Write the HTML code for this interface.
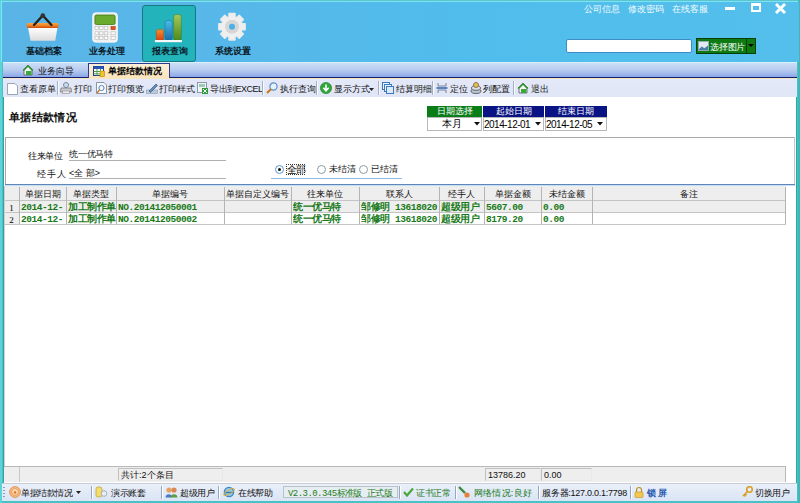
<!DOCTYPE html>
<html><head><meta charset="utf-8">
<style>
*{margin:0;padding:0;box-sizing:border-box}
html,body{width:800px;height:503px;overflow:hidden;background:#fff;font-family:"Liberation Sans",sans-serif;font-size:9px;color:#000}
div,span,svg{position:absolute}
#frame{left:0;top:0;width:800px;height:503px;background:#48c2c6}
#header{left:2px;top:2px;width:797px;height:60px;background:linear-gradient(90deg,#5ab4e6 0%,#56b8e9 30%,#50bdec 60%,#54bfeb 100%)}
.hlab{top:45px;font-size:9px;font-weight:bold;color:#0a1826;white-space:nowrap}
.toplink{top:3px;color:#f4fbff;font-size:9px;white-space:nowrap}
#tabbar{left:3px;top:62px;width:794px;height:16px;background:linear-gradient(180deg,#d8f2fc 0px,#d8f2fc 1px,#ccdef6 1px,#b6cbf0 55%,#92ace8 93%,#86a6f0 100%);border-bottom:1px solid #14206a}
#toolbar{left:3px;top:78px;width:794px;height:19px;background:linear-gradient(180deg,#f6e6c6 0px,#f6e6c6 1px,#e4e8f8 1px,#e0e6f6 100%)}
#content{left:3px;top:97px;width:794px;height:386px;background:#fff;border-left:1px solid #3a9ea4;border-right:1px solid #2ca8a8}
#status{left:2px;top:483px;width:795px;height:18px;background:linear-gradient(180deg,#c8ccd4 0px,#c8ccd4 1px,#eaf0fa 1px,#dae4f4 100%)}
.tb{top:84px;font-size:9px;color:#111;white-space:nowrap;line-height:11px}
.sep{top:81px;width:2px;height:14px;background:#a4b0c4;border-right:1px solid #f8faff}
.sti{top:488px;font-size:9px;letter-spacing:-0.4px;white-space:nowrap;line-height:10px}
.ssep{top:486px;width:2px;height:13px;background:#98a8bc;border-right:1px solid #fff}
.cell{white-space:nowrap;overflow:hidden;line-height:12px}
.hd{background:#ededed;text-align:center;color:#111}
.gv{color:#187a18;font-weight:bold;font-size:9.5px;font-family:"Liberation Mono",monospace;letter-spacing:-0.45px}
</style></head>
<body>
<div id="frame"></div>
<div style="left:0;top:0;width:800px;height:1px;background:#5cc6cc"></div>
<div style="left:0;top:1px;width:800px;height:1px;background:#7ae4f4"></div>
<div style="left:0;top:0;width:2px;height:503px;background:#5ad4d6"></div>
<div style="left:1px;top:1px;width:1px;height:61px;background:#7ae8f6"></div>
<div style="left:798px;top:0;width:2px;height:503px;background:#3cb8b8"></div>
<div id="header"></div>
<!-- header buttons -->
<div style="left:142px;top:5px;width:54px;height:57px;background:#22b3bb;border:1px solid #177a82;border-radius:3px"></div>
<!-- header icons -->
<svg style="left:20px;top:8px" width="50" height="37" viewBox="0 0 50 37">
 <defs><linearGradient id="rim" x1="0" y1="0" x2="0" y2="1"><stop offset="0" stop-color="#f8a848"/><stop offset="0.6" stop-color="#ee7a1e"/><stop offset="1" stop-color="#c84a08"/></linearGradient>
 <linearGradient id="bod" x1="0" y1="0" x2="0" y2="1"><stop offset="0" stop-color="#ffffff"/><stop offset="1" stop-color="#dcdcdc"/></linearGradient></defs>
 <path d="M8 19.5 L37.5 19.5 L35.2 32.7 L10.5 32.7Z" fill="url(#bod)"/>
 <rect x="6.6" y="15" width="32" height="5" rx="2" fill="url(#rim)"/>
 <path d="M14 17 L22.8 7.4 L31.5 17" stroke="#222" stroke-width="2.3" fill="none" stroke-linecap="round"/>
 <circle cx="22.8" cy="7.6" r="2.3" fill="#333"/>
</svg>
<svg style="left:85px;top:8px" width="40" height="37" viewBox="0 0 40 37">
 <rect x="7.7" y="4.8" width="24.7" height="29.4" rx="3" fill="#f0f0f0" stroke="#fafafa" stroke-width="0.8"/>
 <rect x="9.9" y="7" width="20.2" height="9.5" rx="1.5" fill="#6aaa2c" stroke="#3e7a12" stroke-width="0.8"/>
 <g fill="#fafafa" stroke="#b8b8b8" stroke-width="0.6">
 <rect x="10" y="18.6" width="3.6" height="3"/><rect x="14.4" y="18.6" width="3.6" height="3"/><rect x="19.2" y="18.6" width="3.6" height="3"/>
 <rect x="10" y="23.8" width="3.6" height="3"/><rect x="14.4" y="23.8" width="3.6" height="3"/><rect x="19.2" y="23.8" width="3.6" height="3"/><rect x="26" y="23.8" width="4.2" height="3"/>
 <rect x="10" y="28.3" width="3.6" height="3"/><rect x="14.4" y="28.3" width="3.6" height="3"/><rect x="19.2" y="28.3" width="3.6" height="3"/><rect x="26" y="28.3" width="4.2" height="3"/>
 </g>
 <rect x="26" y="18.6" width="4.2" height="3" fill="#e05418" stroke="#a83810" stroke-width="0.6"/>
</svg>
<svg style="left:150px;top:10px" width="40" height="35" viewBox="0 0 40 35">
 <defs><linearGradient id="bo" x1="0" y1="0" x2="0" y2="1"><stop offset="0" stop-color="#f29030"/><stop offset="1" stop-color="#e03c0e"/></linearGradient>
 <linearGradient id="bb" x1="0" y1="0" x2="0" y2="1"><stop offset="0" stop-color="#48bcee"/><stop offset="1" stop-color="#1c6ca8"/></linearGradient>
 <linearGradient id="bg" x1="0" y1="0" x2="0" y2="1"><stop offset="0" stop-color="#a6c85a"/><stop offset="1" stop-color="#4c8a1a"/></linearGradient></defs>
 <rect x="6.3" y="19.5" width="7.3" height="11" rx="2" fill="url(#bo)" stroke="#b83a10" stroke-width="0.4"/>
 <rect x="15" y="10.4" width="7.3" height="20.1" rx="3" fill="url(#bb)" stroke="#1a5a8a" stroke-width="0.4"/>
 <rect x="23.7" y="4.5" width="7.6" height="26" rx="2.5" fill="url(#bg)" stroke="#3a6a10" stroke-width="0.4"/>
 <rect x="4.9" y="30" width="27.1" height="2.2" fill="#f4f8f8"/>
</svg>
<svg style="left:210px;top:8px" width="45" height="37" viewBox="0 0 45 37">
 <path d="M18.99 9.01 L19.08 5.67 L24.92 5.67 L25.01 9.01 L26.76 9.73 L29.18 7.44 L33.31 11.57 L31.02 13.99 L31.74 15.74 L35.08 15.83 L35.08 21.67 L31.74 21.76 L31.02 23.51 L33.31 25.93 L29.18 30.06 L26.76 27.77 L25.01 28.49 L24.92 31.83 L19.08 31.83 L18.99 28.49 L17.24 27.77 L14.82 30.06 L10.69 25.93 L12.98 23.51 L12.26 21.76 L8.92 21.67 L8.92 15.83 L12.26 15.74 L12.98 13.99 L10.69 11.57 L14.82 7.44 L17.24 9.73Z" fill="#efefef" stroke="#ececec" stroke-width="1.6" stroke-linejoin="round"/>
 <circle cx="22" cy="18.75" r="7" fill="#d6d6d6"/>
 <circle cx="22" cy="18.75" r="3" fill="#4cb2e6"/>
</svg>
<div class="hlab" style="left:26px">基础档案</div>
<div class="hlab" style="left:89px">业务处理</div>
<div class="hlab" style="left:152px">报表查询</div>
<div class="hlab" style="left:215px">系统设置</div>
<div class="toplink" style="left:584px">公司信息</div>
<div class="toplink" style="left:628px">修改密码</div>
<div class="toplink" style="left:672px">在线客服</div>
<!-- window buttons -->
<div style="left:725px;top:7px;width:10px;height:3px;background:#fff"></div>
<div style="left:751px;top:3px;width:10px;height:9px;border:2px solid #fff;border-top-width:3px"></div>
<svg style="left:774px;top:3px" width="13" height="11" viewBox="0 0 13 11"><path d="M2 1 L11 10 M11 1 L2 10" stroke="#fff" stroke-width="2.9"/></svg>
<!-- search -->
<div style="left:566px;top:39px;width:126px;height:14px;background:#fff;border:1px solid #3d8cc8;border-radius:2px"></div>
<div style="left:696px;top:38px;width:60px;height:16px;background:#0d7a12;border:1px solid #063e08"></div>
<div style="left:746px;top:38px;width:1px;height:16px;background:#063e08"></div>
<svg style="left:698px;top:41px" width="11" height="10" viewBox="0 0 12 11"><rect x="0.5" y="0.5" width="11" height="10" fill="#dfeaf2" stroke="#9ab"/><path d="M1 9 L4 6 L7 8 L11 5 L11 10 L1 10Z" fill="#4a7fa8"/></svg>
<div style="left:710px;top:41px;color:#fff;font-size:9px;letter-spacing:-0.2px">选择图片</div>
<svg style="left:748px;top:44px" width="7" height="4"><path d="M0 0 L6 0 L3 3Z" fill="#000"/></svg>

<div id="tabbar"></div>
<!-- tabs -->
<svg style="left:22px;top:64px" width="12" height="12" viewBox="0 0 12 12"><path d="M1 6 L6 1 L11 6 L10 6 L10 11 L2 11 L2 6Z" fill="#f4f4f4" stroke="#556" stroke-width="0.8"/><path d="M0.5 6.5 L6 1 L11.5 6.5 L9.5 6.5 L6 3 L2.5 6.5Z" fill="#2c9a2a"/><path d="M4 7 L9.5 7 L9.5 11 L4 11Z" fill="#3aa83a"/></svg>
<div style="left:38px;top:65px;font-size:9px;color:#111">业务向导</div>
<div style="left:88px;top:63px;width:82px;height:16px;background:linear-gradient(180deg,#fdf0d8 0%,#fbe3b8 100%);border:1px solid #2a3c8e;border-bottom:none"></div>
<svg style="left:93px;top:66px" width="12" height="11" viewBox="0 0 12 11"><rect x="0.5" y="0.5" width="10" height="9" fill="#fff" stroke="#1b3d8c"/><rect x="0.5" y="0.5" width="10" height="2.5" fill="#2a55b8"/><path d="M4 3 V10 M7.5 3 V10 M1 5.5 H10.5 M1 7.8 H10.5" stroke="#3a9a3a" stroke-width="0.9"/><rect x="7" y="5" width="4.5" height="5.5" fill="#f2c22a" stroke="#b08010" stroke-width="0.6"/></svg>
<div style="left:108px;top:65px;font-size:9px;font-weight:bold;color:#000">单据结款情况</div>
<div id="toolbar"></div>
<!-- toolbar -->
<svg style="left:7px;top:83px" width="11" height="12" viewBox="0 0 11 12"><path d="M0.5 0.5 H8 L10.5 3 V11.5 H0.5Z" fill="#fff" stroke="#9aa6b8"/></svg>
<div class="tb" style="left:20px">查看原单</div>
<div class="sep" style="left:57px"></div>
<svg style="left:60px;top:82px" width="12" height="12" viewBox="0 0 12 12"><circle cx="6" cy="3" r="2.5" fill="#cde" stroke="#789"/><path d="M1 6 H11 L11.5 10 H0.5Z" fill="#c8ccd2" stroke="#777" stroke-width="0.8"/><rect x="2.5" y="9" width="7" height="2.5" fill="#eee" stroke="#888" stroke-width="0.6"/></svg>
<div class="tb" style="left:74px">打印</div>
<svg style="left:96px;top:82px" width="11" height="12" viewBox="0 0 11 12"><path d="M0.5 0.5 H8 L10.5 3 V11.5 H0.5Z" fill="#f6f8fa" stroke="#8894a8"/><circle cx="5.5" cy="6" r="2.6" fill="none" stroke="#5588bb" stroke-width="1"/><path d="M3.5 8 L1 11" stroke="#d07a20" stroke-width="1.4"/></svg>
<div class="tb" style="left:108px">打印预览</div>
<svg style="left:146px;top:82px" width="12" height="12" viewBox="0 0 12 12"><rect x="0.5" y="8" width="11" height="3.5" fill="#bcd" stroke="#89a" stroke-width="0.6"/><path d="M3 9 L10 2 L11.5 3.5 L4.5 10.5Z" fill="#5b8fd0" stroke="#345" stroke-width="0.6"/></svg>
<div class="tb" style="left:159px">打印样式</div>
<svg style="left:197px;top:82px" width="11" height="12" viewBox="0 0 11 12"><rect x="0.5" y="0.5" width="9" height="10" fill="#f2f4f6" stroke="#8a98aa"/><rect x="2" y="2" width="6" height="3" fill="#9cb" /><rect x="5" y="6" width="6" height="6" fill="#2e9a3a"/><path d="M6 7 L10 11 M10 7 L6 11" stroke="#fff" stroke-width="1"/></svg>
<div class="tb" style="left:210px;letter-spacing:-0.5px">导出到EXCEL</div>
<div class="sep" style="left:262px"></div>
<svg style="left:266px;top:82px" width="12" height="12" viewBox="0 0 12 12"><circle cx="7.5" cy="4.5" r="3.6" fill="#e6f2fb" stroke="#5a8fc4" stroke-width="1.2"/><path d="M5 7 L1 11" stroke="#c8781c" stroke-width="2"/></svg>
<div class="tb" style="left:280px">执行查询</div>
<div class="sep" style="left:316px"></div>
<svg style="left:320px;top:82px" width="12" height="12" viewBox="0 0 12 12"><circle cx="6" cy="6" r="5.6" fill="#2ea63a" stroke="#1a7a24" stroke-width="0.6"/><path d="M6 2.5 V8 M3.3 5.8 L6 8.8 L8.7 5.8" stroke="#fff" stroke-width="1.6" fill="none"/></svg>
<div class="tb" style="left:334px">显示方式</div>
<svg style="left:369px;top:88px" width="5" height="3"><path d="M0 0 H5 L2.5 3Z" fill="#222"/></svg>
<div class="sep" style="left:378px"></div>
<svg style="left:382px;top:82px" width="12" height="12" viewBox="0 0 12 12"><rect x="0.5" y="0.5" width="7" height="7" fill="#eef4fb" stroke="#3a78c0"/><rect x="2.5" y="2.5" width="7" height="7" fill="#eef4fb" stroke="#3a78c0"/><rect x="4.5" y="4.5" width="7" height="7" fill="#dde9f6" stroke="#3a78c0"/></svg>
<div class="tb" style="left:396px">结算明细</div>
<div class="sep" style="left:432px"></div>
<svg style="left:436px;top:82px" width="12" height="12" viewBox="0 0 12 12"><path d="M0.5 6 H11.5" stroke="#3a6ab0" stroke-width="1.6"/><path d="M2 1 V4 H10 V1 M2 11 V8 H10 V11" stroke="#6a7a90" stroke-width="0.9" fill="none"/></svg>
<div class="tb" style="left:450px">定位</div>
<svg style="left:470px;top:82px" width="12" height="12" viewBox="0 0 12 12"><ellipse cx="6" cy="9" rx="5" ry="2.5" fill="#b9c4cc" stroke="#667"/><ellipse cx="6" cy="6" rx="4.5" ry="2.3" fill="#d8dee2" stroke="#667"/><circle cx="6" cy="3" r="2.5" fill="#e8c050" stroke="#875"/></svg>
<div class="tb" style="left:483px">列配置</div>
<div class="sep" style="left:513px"></div>
<svg style="left:517px;top:82px" width="12" height="12" viewBox="0 0 12 12"><path d="M1 6 L6 1 L11 6 L10 6 L10 11 L2 11 L2 6Z" fill="#f4f4f4" stroke="#556" stroke-width="0.8"/><path d="M0.5 6.5 L6 1 L11.5 6.5 L9.5 6.5 L6 3 L2.5 6.5Z" fill="#2c9a2a"/><path d="M4 7 L9.5 7 L9.5 11 L4 11Z" fill="#3aa83a"/></svg>
<div class="tb" style="left:531px">退出</div>
<div id="content"></div>
<!-- title -->
<div style="left:9px;top:110px;letter-spacing:0.35px;font-size:11.4px;font-weight:bold;color:#111;white-space:nowrap">单据结款情况</div>
<!-- date block -->
<div style="left:427px;top:106px;width:55px;height:11px;background:#0b7d18;color:#fff;text-align:center;font-size:9px;line-height:11px">日期选择</div>
<div style="left:483px;top:106px;width:61px;height:11px;background:#0a1384;color:#fff;text-align:center;font-size:9px;line-height:11px">起始日期</div>
<div style="left:545px;top:106px;width:62px;height:11px;background:#0a1384;color:#fff;text-align:center;font-size:9px;line-height:11px">结束日期</div>
<div style="left:427px;top:117px;width:55px;height:14px;border:1px solid #b8b8b8;background:#fff"></div>
<div style="left:483px;top:117px;width:61px;height:14px;border:1px solid #b8b8b8;background:#fff"></div>
<div style="left:545px;top:117px;width:62px;height:14px;border:1px solid #b8b8b8;background:#fff"></div>
<div style="left:442px;top:118px;font-size:10px;line-height:12px">本月</div>
<div style="left:484px;top:119px;font-size:10px;line-height:12px;letter-spacing:-0.5px">2014-12-01</div>
<div style="left:546px;top:119px;font-size:10px;line-height:12px;letter-spacing:-0.5px">2014-12-05</div>
<svg style="left:474px;top:122px" width="6" height="4"><path d="M0 0 H6 L3 3.5Z" fill="#111"/></svg>
<svg style="left:535px;top:122px" width="6" height="4"><path d="M0 0 H6 L3 3.5Z" fill="#111"/></svg>
<svg style="left:597px;top:122px" width="6" height="4"><path d="M0 0 H6 L3 3.5Z" fill="#111"/></svg>
<!-- query panel -->
<div style="left:5px;top:137px;width:790px;height:48px;border:1px solid #a8a8a8;border-right-color:#c8c8c8;border-bottom:none;background:#fff"></div>
<div style="left:5px;top:184px;width:790px;height:1px;background:#5f86b8"></div>
<div style="left:5px;top:185px;width:790px;height:1px;background:#c4def4"></div>
<div style="left:28px;top:150px;font-size:9px;color:#111;letter-spacing:-0.35px">往来单位</div>
<div style="left:37px;top:168px;font-size:9px;color:#111;letter-spacing:0.9px">经手人</div>
<div style="left:69px;top:148px;font-size:9px;color:#111;letter-spacing:-0.2px">统一优马特</div>
<div style="left:69px;top:167px;font-size:9px;color:#111">&lt;全 部&gt;</div>
<div style="left:69px;top:160px;width:157px;height:1px;background:#b0b0b0"></div>
<div style="left:69px;top:178px;width:157px;height:1px;background:#b0b0b0"></div>
<!-- radios -->
<div style="left:271px;top:178px;width:131px;height:1px;background:#8fb8e4"></div>
<div style="left:275px;top:165px;width:9px;height:9px;border-radius:50%;border:1px solid #5a96d8;background:#fff"></div>
<div style="left:278px;top:168px;width:3px;height:3px;border-radius:50%;background:#111"></div>
<div style="left:286px;top:164px;width:19px;height:11px;border:1px dotted #333"></div>
<div style="left:287px;top:164px;font-size:10px;line-height:12px;color:#111;letter-spacing:-1px">全部</div>
<div style="left:317px;top:165px;width:9px;height:9px;border-radius:50%;border:1px solid #8a9aaa;background:#fff"></div>
<div style="left:329px;top:163px;font-size:9px;color:#111">未结清</div>
<div style="left:359px;top:165px;width:9px;height:9px;border-radius:50%;border:1px solid #8a9aaa;background:#fff"></div>
<div style="left:371px;top:163px;font-size:9px;color:#111">已结清</div>
<!-- grid -->
<div style="left:4px;top:186px;width:782px;height:14px;background:#eeeeee"></div>
<div style="left:4px;top:201px;width:782px;height:11px;background:#eeeeee"></div>
<div style="left:4px;top:213px;width:15px;height:11px;background:#eeeeee"></div>
<div style="left:4px;top:200px;width:782px;height:1px;background:#c4c4c4"></div>
<div style="left:4px;top:212px;width:782px;height:1px;background:#c4c4c4"></div>
<div style="left:4px;top:224px;width:782px;height:1px;background:#c4c4c4"></div>
<div style="left:19px;top:187px;width:1px;height:37px;background:#b4b4b4"></div>
<div style="left:66px;top:187px;width:1px;height:37px;background:#b4b4b4"></div>
<div style="left:116px;top:187px;width:1px;height:37px;background:#b4b4b4"></div>
<div style="left:224px;top:187px;width:1px;height:37px;background:#b4b4b4"></div>
<div style="left:291px;top:187px;width:1px;height:37px;background:#b4b4b4"></div>
<div style="left:359px;top:187px;width:1px;height:37px;background:#b4b4b4"></div>
<div style="left:439px;top:187px;width:1px;height:37px;background:#b4b4b4"></div>
<div style="left:484px;top:187px;width:1px;height:37px;background:#b4b4b4"></div>
<div style="left:541px;top:187px;width:1px;height:37px;background:#b4b4b4"></div>
<div style="left:592px;top:187px;width:1px;height:37px;background:#b4b4b4"></div>
<div style="left:785px;top:187px;width:1px;height:37px;background:#b4b4b4"></div>
<div style="left:4px;top:186px;width:1px;height:280px;background:#d0d0d0"></div>
<div class="cell" style="left:19px;top:188px;width:47px;text-align:center;font-size:9px;color:#111">单据日期</div>
<div class="cell" style="left:66px;top:188px;width:50px;text-align:center;font-size:9px;color:#111">单据类型</div>
<div class="cell" style="left:116px;top:188px;width:108px;text-align:center;font-size:9px;color:#111">单据编号</div>
<div class="cell" style="left:224px;top:188px;width:67px;text-align:center;font-size:9px;color:#111">单据自定义编号</div>
<div class="cell" style="left:291px;top:188px;width:68px;text-align:center;font-size:9px;color:#111">往来单位</div>
<div class="cell" style="left:359px;top:188px;width:80px;text-align:center;font-size:9px;color:#111">联系人</div>
<div class="cell" style="left:439px;top:188px;width:45px;text-align:center;font-size:9px;color:#111">经手人</div>
<div class="cell" style="left:484px;top:188px;width:57px;text-align:center;font-size:9px;color:#111">单据金额</div>
<div class="cell" style="left:541px;top:188px;width:51px;text-align:center;font-size:9px;color:#111">未结金额</div>
<div class="cell" style="left:592px;top:188px;width:193px;text-align:center;font-size:9px;color:#111">备注</div>
<div class="cell" style="left:4px;top:202px;width:15px;text-align:center;font-size:9px;font-family:'Liberation Serif',serif">1</div>
<div class="cell gv" style="left:21px;top:202px;width:45px">2014-12-</div>
<div class="cell gv" style="left:68px;top:202px;width:48px">加工制作单</div>
<div class="cell gv" style="left:118px;top:202px;width:106px">NO.201412050001</div>
<div class="cell gv" style="left:293px;top:202px;width:66px">统一优马特</div>
<div class="cell gv" style="left:361px;top:202px;width:78px">邹修明 13618020</div>
<div class="cell gv" style="left:441px;top:202px;width:43px">超级用户</div>
<div class="cell gv" style="left:486px;top:202px;width:55px">5607.00</div>
<div class="cell gv" style="left:543px;top:202px;width:49px">0.00</div>
<div class="cell" style="left:4px;top:214px;width:15px;text-align:center;font-size:9px;font-family:'Liberation Serif',serif">2</div>
<div class="cell gv" style="left:21px;top:214px;width:45px">2014-12-</div>
<div class="cell gv" style="left:68px;top:214px;width:48px">加工制作单</div>
<div class="cell gv" style="left:118px;top:214px;width:106px">NO.201412050002</div>
<div class="cell gv" style="left:293px;top:214px;width:66px">统一优马特</div>
<div class="cell gv" style="left:361px;top:214px;width:78px">邹修明 13618020</div>
<div class="cell gv" style="left:441px;top:214px;width:43px">超级用户</div>
<div class="cell gv" style="left:486px;top:214px;width:55px">8179.20</div>
<div class="cell gv" style="left:543px;top:214px;width:49px">0.00</div>
<div style="left:4px;top:466px;width:782px;height:1px;background:#b8b8b8"></div>
<div style="left:4px;top:467px;width:782px;height:15px;background:#eeeeee"></div>
<div style="left:785px;top:466px;width:1px;height:16px;background:#b8b8b8"></div>
<div style="left:19px;top:467px;width:1px;height:15px;background:#c8c8c8"></div>
<div style="left:118px;top:468px;width:105px;height:13px;border:1px solid #c0c0c0;border-right-color:#e8e8e8;border-bottom-color:#e8e8e8;background:#eeeeee"></div>
<div class="cell" style="left:121px;top:469px;font-size:9px;color:#111">共计:2个条目</div>
<div style="left:485px;top:468px;width:56px;height:13px;border:1px solid #c0c0c0;border-right-color:#e8e8e8;border-bottom-color:#e8e8e8;background:#eeeeee"></div>
<div class="cell" style="left:488px;top:469px;font-size:9px;color:#111">13786.20</div>
<div style="left:541px;top:468px;width:51px;height:13px;border:1px solid #c0c0c0;border-right-color:#e8e8e8;border-bottom-color:#e8e8e8;background:#eeeeee"></div>
<div class="cell" style="left:544px;top:469px;font-size:9px;color:#111">0.00</div>
<div id="status"></div>
<!-- status items -->
<div style="left:3px;top:487px;width:2px;height:12px;background:repeating-linear-gradient(180deg,#8aa0bc 0 1px,transparent 1px 3px)"></div>
<svg style="left:9px;top:486px" width="12" height="12" viewBox="0 0 12 12"><circle cx="6" cy="6" r="5.4" fill="#f6c08a" stroke="#e0803a" stroke-width="0.8"/><circle cx="6" cy="6" r="3.4" fill="#fbe2c6" stroke="#e88a3a" stroke-width="0.8"/><circle cx="6" cy="6.5" r="1.4" fill="#e8802a"/></svg>
<div class="sti" style="left:21px;color:#111">单据结款情况</div>
<svg style="left:76px;top:491px" width="5" height="3"><path d="M0 0 H5 L2.5 3Z" fill="#222"/></svg>
<div class="ssep" style="left:91px"></div>
<svg style="left:95px;top:486px" width="13" height="12" viewBox="0 0 13 12"><rect x="1" y="1" width="6" height="10" rx="2" fill="#f4dc6a" stroke="#b8a040" stroke-width="0.7"/><circle cx="9" cy="7.5" r="2.8" fill="#e8eef4" stroke="#8898a8" stroke-width="0.7"/></svg>
<div class="sti" style="left:111px;color:#111">演示账套</div>
<div class="ssep" style="left:161px"></div>
<svg style="left:165px;top:486px" width="13" height="12" viewBox="0 0 13 12"><circle cx="4" cy="4" r="2.6" fill="#e8a060"/><path d="M0.5 11.5 C0.5 7 7 7 7 11.5Z" fill="#4a78c8"/><circle cx="9" cy="4" r="2.6" fill="#d88850"/><path d="M5.5 11.5 C5.5 7 12.5 7 12.5 11.5Z" fill="#58a040"/></svg>
<div class="sti" style="left:180px;color:#111">超级用户</div>
<div class="ssep" style="left:218px"></div>
<svg style="left:223px;top:486px" width="12" height="12" viewBox="0 0 12 12"><circle cx="6" cy="6" r="4.6" fill="#8cc8ec" stroke="#3a88c8" stroke-width="1.4"/><path d="M2.5 6.5 H9.5" stroke="#2a70b0" stroke-width="1.2"/><ellipse cx="6" cy="6" rx="6" ry="2" fill="none" stroke="#e8b030" stroke-width="0.9" transform="rotate(-30 6 6)"/></svg>
<div class="sti" style="left:238px;color:#111">在线帮助</div>
<div style="left:283px;top:486px;width:115px;height:12px;border:1px solid #b8c0c8;background:#e6eef2"></div>
<div class="sti" style="left:288px;top:489px;color:#1f7a22;font-family:'Liberation Mono',monospace;font-size:9px;letter-spacing:-0.55px;font-weight:normal">V2.3.0.345标准版 正式版</div>
<div class="ssep" style="left:399px"></div>
<svg style="left:403px;top:487px" width="11" height="10" viewBox="0 0 11 10"><path d="M1 5 L4 8.5 L10 1.5" stroke="#4aa83a" stroke-width="2.2" fill="none"/></svg>
<div class="sti" style="left:416px;color:#1a7a1a">证书正常</div>
<div class="ssep" style="left:455px"></div>
<svg style="left:458px;top:486px" width="13" height="12" viewBox="0 0 13 12"><path d="M1 1 L7 7" stroke="#3a8a3a" stroke-width="2.4"/><circle cx="9" cy="9" r="2.6" fill="#e8803a"/></svg>
<div class="sti" style="left:474px;color:#1a7a1a;letter-spacing:0.2px">网络情况:良好</div>
<div class="ssep" style="left:538px"></div>
<div class="sti" style="left:542px;color:#111;letter-spacing:-0.25px">服务器:127.0.0.1:7798</div>
<div class="ssep" style="left:630px"></div>
<svg style="left:634px;top:486px" width="10" height="12" viewBox="0 0 10 12"><path d="M2.5 6 V4 A2.5 2.5 0 0 1 7.5 4 V6" stroke="#c09020" stroke-width="1.2" fill="none"/><rect x="1" y="6" width="8" height="5.5" rx="1" fill="#f4c848" stroke="#c09020" stroke-width="0.6"/></svg>
<div class="sti" style="left:647px;color:#2a5ab0;font-weight:bold">锁 屏</div>
<svg style="left:742px;top:486px" width="11" height="12" viewBox="0 0 11 12"><circle cx="7.5" cy="3.5" r="2.8" fill="none" stroke="#d8a020" stroke-width="1.6"/><path d="M5.5 5.5 L1 10 M2 9 L3.5 10.5 M3.2 7.8 L4.6 9.2" stroke="#d8a020" stroke-width="1.5"/></svg>
<div class="sti" style="left:755px;color:#111">切换用户</div>
</body></html>
